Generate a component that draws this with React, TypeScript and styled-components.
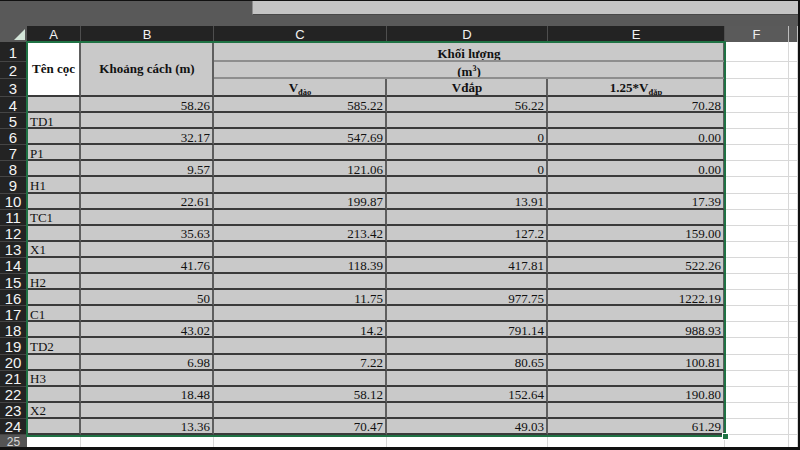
import React from 'react';
import styled, { createGlobalStyle, css } from 'styled-components';

const GlobalStyle = createGlobalStyle`
  html, body { margin: 0; padding: 0; background: #111; }
  #root { width: 800px; height: 450px; }
  * { box-sizing: border-box; }
`;

const Frame = styled.div`
  width: 800px;
  height: 450px;
  border-top: 1px solid #111;
  border-right: 2px solid #111;
  border-bottom: 3px solid #111;
  background: #595959;
  display: flex;
  flex-direction: column;
  overflow: hidden;
`;

const TopBar = styled.div`
  height: 25px;
  flex: none;
  display: flex;
  align-items: flex-start;
  padding-left: 252px;
`;

const FormulaBox = styled.div`
  flex: 1;
  height: 14px;
  background: #c4c4c4;
  border-left: 1px solid #8e8e8e;
  border-bottom: 1px solid #484848;
`;

const Sheet = styled.div`
  flex: 1;
  position: relative;
  display: grid;
  grid-template-columns: 27px 54px 133px 173px 161px 177px 64px 1fr;
  grid-template-rows: 16px 20px 17px 18px repeat(21, 16.1px) 1fr;
  font-family: 'Liberation Serif', 'Times New Roman', serif;
  font-size: 13px;
  color: #111;
`;

const Corner = styled.div`
  position: relative;
  background: #595959;
  &::after {
    content: '';
    position: absolute;
    right: 2px;
    bottom: 2px;
    width: 0;
    height: 0;
    border-left: 11px solid transparent;
    border-bottom: 11px solid #d4e6d9;
  }
`;

const ColHead = styled.div<{ $sel?: boolean }>`
  display: flex;
  align-items: center;
  justify-content: center;
  font-family: 'Liberation Sans', Arial, sans-serif;
  font-size: 13px;
  padding-top: 1px;
  ${(p) =>
    p.$sel
      ? css`
          background: #232323;
          color: #f2f2f2;
          border-right: 1px solid #4e4e4e;
          border-bottom: 1px solid #b6dcc2;
        `
      : css`
          background: #5a5a5a;
          color: #ededed;
          border-right: 1px solid #bdbdbd;
        `}
`;

const RowHead = styled.div<{ $sel?: boolean }>`
  display: flex;
  justify-content: center;
  font-family: 'Liberation Sans', Arial, sans-serif;
  font-size: 15px;
  line-height: 1;
  ${(p) =>
    p.$sel
      ? css`
          align-items: center;
          padding-top: 1px;
          background: #232323;
          color: #f4f4f4;
          border-bottom: 1px solid #454545;
          border-right: 1px solid #a9d5b7;
        `
      : css`
          align-items: flex-start;
          padding-top: 1px;
          font-size: 12px;
          background: #545454;
          color: #d6d6d6;
        `}
`;

const Cell = styled.div<{ $align?: 'left' | 'right' | 'center'; $tone?: 'gray' | 'white' }>`
  display: flex;
  align-items: center;
  padding: 2px 2px 0 3px;
  overflow: hidden;
  white-space: nowrap;
  line-height: 1;
  justify-content: ${(p) =>
    p.$align === 'right' ? 'flex-end' : p.$align === 'center' ? 'center' : 'flex-start'};
  ${(p) =>
    p.$tone === 'white'
      ? css`
          background: #ffffff;
          border-right: 1px solid #d8d8d8;
          border-bottom: 1px solid #d8d8d8;
        `
      : css`
          background: #c9c9c9;
          border-right: 2px solid #5e5e5e;
          border-bottom: 2px solid #3a3a3a;
        `}
`;

const HeadCell = styled(Cell)<{
  $rows?: number;
  $cols?: number;
  $soft?: boolean;
  $white?: boolean;
  $lift?: number;
}>`
  font-weight: bold;
  justify-content: center;
  grid-row: span ${(p) => p.$rows ?? 1};
  grid-column: span ${(p) => p.$cols ?? 1};
  padding-top: ${(p) => p.$lift ?? 0}px;
  ${(p) =>
    p.$white &&
    css`
      background: #ffffff;
    `}
  ${(p) =>
    p.$soft &&
    css`
      border-bottom: 2px solid #8e8e8e;
    `}
`;

const Sub = styled.span`
  font-size: 8.5px;
  position: relative;
  top: 3px;
`;

const Sup = styled.span`
  font-size: 8px;
  position: relative;
  top: -5px;
`;

const Selection = styled.div`
  position: absolute;
  grid-column: 2 / 7;
  grid-row: 2 / 26;
  top: -1px;
  left: -1px;
  right: -1px;
  bottom: -2px;
  border: 2px solid #1f7244;
  pointer-events: none;
  z-index: 3;
`;

const Handle = styled.div`
  position: absolute;
  right: -5px;
  bottom: -5px;
  width: 7px;
  height: 7px;
  background: #1f7244;
  border: 1px solid #ffffff;
`;

const labels: Record<number, string> = {
  5: 'TD1',
  7: 'P1',
  9: 'H1',
  11: 'TC1',
  13: 'X1',
  15: 'H2',
  17: 'C1',
  19: 'TD2',
  21: 'H3',
  23: 'X2',
};

const values: Record<number, string[]> = {
  4: ['58.26', '585.22', '56.22', '70.28'],
  6: ['32.17', '547.69', '0', '0.00'],
  8: ['9.57', '121.06', '0', '0.00'],
  10: ['22.61', '199.87', '13.91', '17.39'],
  12: ['35.63', '213.42', '127.2', '159.00'],
  14: ['41.76', '118.39', '417.81', '522.26'],
  16: ['50', '11.75', '977.75', '1222.19'],
  18: ['43.02', '14.2', '791.14', '988.93'],
  20: ['6.98', '7.22', '80.65', '100.81'],
  22: ['18.48', '58.12', '152.64', '190.80'],
  24: ['13.36', '70.47', '49.03', '61.29'],
};

const dataRows = Array.from({ length: 21 }, (_, i) => i + 4);
const cols = ['A', 'B', 'C', 'D', 'E'];

export default function App() {
  return (
    <>
      <GlobalStyle />
      <Frame>
        <TopBar>
          <FormulaBox />
        </TopBar>
        <Sheet>
          <Corner />
          {cols.map((c) => (
            <ColHead key={c} $sel>
              {c}
            </ColHead>
          ))}
          <ColHead>F</ColHead>
          <ColHead />

          {/* row 1 */}
          <RowHead $sel>1</RowHead>
          <HeadCell $rows={3} $white>
            Tên cọc
          </HeadCell>
          <HeadCell $rows={3}>Khoảng cách (m)</HeadCell>
          <HeadCell $cols={3} $soft $lift={5}>
            Khối lượng
          </HeadCell>
          <Cell $tone="white" />
          <Cell $tone="white" />

          {/* row 2 */}
          <RowHead $sel>2</RowHead>
          <HeadCell $cols={3} $soft $lift={3}>
            <span>
              (m<Sup>3</Sup>)
            </span>
          </HeadCell>
          <Cell $tone="white" />
          <Cell $tone="white" />

          {/* row 3 */}
          <RowHead $sel>3</RowHead>
          <HeadCell $lift={1}>
            <span>
              V<Sub>đào</Sub>
            </span>
          </HeadCell>
          <HeadCell>Vđắp</HeadCell>
          <HeadCell $lift={1}>
            <span>
              1.25*V<Sub>đắp</Sub>
            </span>
          </HeadCell>
          <Cell $tone="white" />
          <Cell $tone="white" />

          {dataRows.map((r) => (
            <React.Fragment key={r}>
              <RowHead $sel>{r}</RowHead>
              <Cell $align="left">{labels[r] ?? ''}</Cell>
              {(values[r] ?? ['', '', '', '']).map((v, i) => (
                <Cell key={i} $align="right">
                  {v}
                </Cell>
              ))}
              <Cell $tone="white" />
              <Cell $tone="white" />
            </React.Fragment>
          ))}

          <RowHead>25</RowHead>
          {Array.from({ length: 7 }, (_, i) => (
            <Cell key={i} $tone="white" />
          ))}

          <Selection>
            <Handle />
          </Selection>
        </Sheet>
      </Frame>
    </>
  );
}
